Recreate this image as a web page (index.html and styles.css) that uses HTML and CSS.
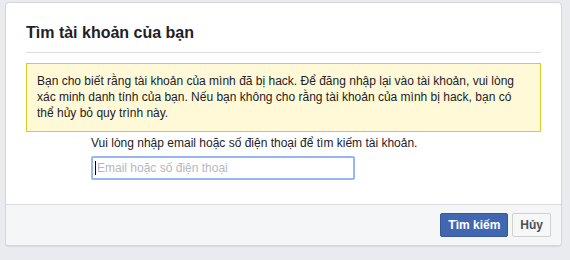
FILE: index.html
```html
<!DOCTYPE html>
<html lang="vi">
<head>
<meta charset="utf-8">
<title>Tìm tài khoản của bạn</title>
<link rel="stylesheet" href="styles.css">
</head>
<body>
<div class="card">
  <div class="header"><h2 class="title">Tìm tài khoản của bạn</h2></div>
  <div class="content">
    <div class="notice">Bạn cho biết rằng tài khoản của mình đã bị hack. Để đăng nhập lại vào tài khoản, vui lòng xác minh danh tính của bạn. Nếu bạn không cho rằng tài khoản của mình bị hack, bạn có thể hủy bỏ quy trình này.</div>
    <div class="search">
      <div class="prompt">Vui lòng nhập email hoặc số điện thoại để tìm kiếm tài khoản.</div>
      <div class="field"><span class="caret"></span><span class="placeholder">Email hoặc số điện thoại</span></div>
    </div>
  </div>
  <div class="footer">
    <button class="btn btn-primary">Tìm kiếm</button>
    <button class="btn btn-default">Hủy</button>
  </div>
</div>
</body>
</html>
```
FILE: styles.css
```css
* { box-sizing: border-box; }
html, body { margin: 0; }
body {
  background: #e9ebee;
  padding: 2px 0 0 5px;
  font-family: "Liberation Sans", Arial, sans-serif;
  font-size: 12px;
  color: #1d2129;
  height: 260px;
}
.card {
  width: 557px;
  height: 244px;
  background: #fff;
  border: 1px solid #d3d6db;
  border-radius: 4px;
  box-shadow: 0 1px 1px rgba(0,0,0,0.08);
  display: flex;
  flex-direction: column;
  overflow: hidden;
}
.header {
  margin: 0 20px;
  padding: 20px 0 9px;
  border-bottom: 1px solid #dadde1;
}
.title {
  margin: 0;
  font-size: 16px;
  line-height: 20px;
  font-weight: bold;
  color: #1d2129;
}
.content {
  flex: 1;
  padding: 10px 20px 0;
}
.notice {
  background: #fff9d7;
  border: 1px solid #e2c822;
  padding: 9px 10px 10px;
  line-height: 16px;
}
.search {
  margin: 3px 0 0 65px;
}
.prompt {
  line-height: 16px;
}
.field {
  margin-top: 5px;
  width: 264px;
  height: 24px;
  border: 2px solid #98b6f4;
  border-radius: 2px;
  display: flex;
  align-items: center;
  padding-left: 2px;
}
.caret {
  width: 1px;
  height: 14px;
  background: #000;
}
.placeholder {
  color: #b4b8bf;
  font-size: 12px;
  margin-left: 1px;
}
.footer {
  background: #f5f6f7;
  border-top: 1px solid #dadde1;
  padding: 8px 10px 8px;
  display: flex;
  justify-content: flex-end;
  gap: 4px;
}
.btn {
  height: 24px;
  font-family: "Liberation Sans", Arial, sans-serif;
  font-size: 12px;
  font-weight: bold;
  border-radius: 2px;
  padding: 0 7px;
  line-height: 22px;
  cursor: pointer;
}
.btn-primary {
  background: #4267b2;
  border: 1px solid #365899;
  color: #fff;
}
.btn-default {
  background: #f6f7f9;
  border: 1px solid #ced0d4;
  color: #4b4f56;
}
```
